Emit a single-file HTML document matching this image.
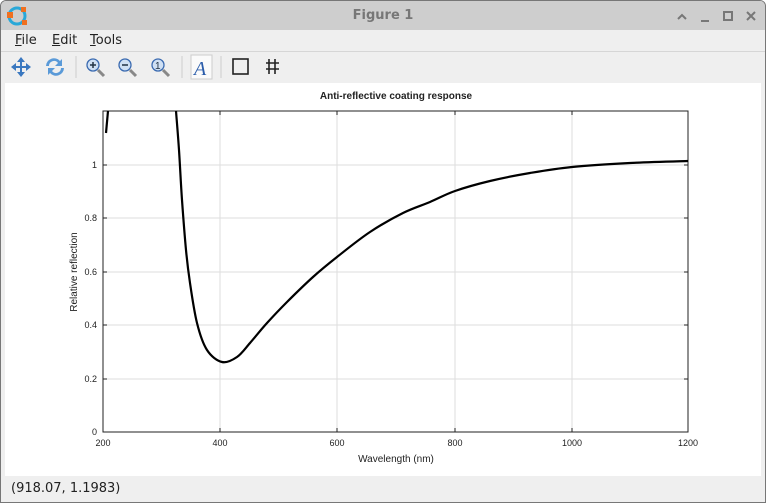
<!DOCTYPE html>
<html><head><style>
body{margin:0;width:766px;height:503px;overflow:hidden;background:#fff;font-family:"Liberation Sans","DejaVu Sans",sans-serif}
.win{position:absolute;left:0;top:0;width:764px;height:501px;border:1px solid #777;border-radius:6px 6px 0 0;background:#efefef;overflow:hidden}
.title{position:absolute;left:0;top:0;width:100%;height:29px;background:#cecece;text-align:center;line-height:30px;font-size:13px;color:#777;font-weight:bold;font-family:"DejaVu Sans",sans-serif}
.menu{position:absolute;top:29px;left:0;width:100%;height:21px;background:#efefef;border-bottom:1px solid #d6d6d6;font-size:13px;font-family:"DejaVu Sans",sans-serif;color:#222}
.menu span{position:absolute;top:3px}
.tb{position:absolute;top:51px;left:0;width:100%;height:30px;background:#efefef}
.plot{position:absolute;top:82px;left:4px;width:756px;height:393px;background:#fff}
.status{position:absolute;top:476px;left:0;width:100%;height:25px;background:#efefef;font-size:13px;font-family:"DejaVu Sans",sans-serif;color:#222}
</style></head><body><div class="win">
<div class="title">Figure 1
<svg style="position:absolute;left:5px;top:4px" width="22" height="22"><circle cx="11" cy="11" r="8" fill="none" stroke="#2aa8d8" stroke-width="3"/><rect x="1" y="7" width="6" height="6" fill="#f07020"/><rect x="15" y="2" width="5" height="5" fill="#f07020"/><rect x="16" y="15" width="5" height="5" fill="#f07020"/></svg>
<svg style="position:absolute;left:672px;top:8px" width="90" height="16" stroke="#777" stroke-width="2" fill="none"><path d="M5 10l4-4 4 4"/><path d="M28 12h8"/><rect x="51" y="3" width="8" height="8"/><path d="M74 3l8 8M82 3l-8 8"/></svg>
</div>
<div class="menu"><span style="left:14px"><u>F</u>ile</span><span style="left:51px"><u>E</u>dit</span><span style="left:89px"><u>T</u>ools</span></div>
<div class="tb"><svg width="300" height="30">
<g fill="#3a78c0"><path d="M20 5l4 5h-3v4h4v-3l5 4-5 4v-3h-4v4h3l-4 5-4-5h3v-4h-4v3l-5-4 5-4v3h4v-4h-3z"/></g>
<g fill="#5a9ad8"><path d="M45 14a8 8 0 0 1 14-5l2-2v7h-7l3-3a5 5 0 0 0-9 3z"/><path d="M63 16a8 8 0 0 1-14 5l-2 2v-7h7l-3 3a5 5 0 0 0 9-3z"/></g>
<line x1="75" y1="4" x2="75" y2="26" stroke="#ccc"/>
<g stroke="#888" stroke-width="3"><path d="M97 18l6 6M129 18l6 6M162 18l6 6"/></g>
<g fill="#cfe0f4" stroke="#3a6ab0" stroke-width="1.3"><circle cx="92" cy="13" r="6"/><circle cx="124" cy="13" r="6"/><circle cx="157" cy="13" r="6"/></g>
<path d="M89 13h6M92 10v6M121 13h6" stroke="#234" stroke-width="1.5"/>
<text x="154" y="17" font-size="10" fill="#234">1</text>
<line x1="181" y1="4" x2="181" y2="26" stroke="#ccc"/>
<rect x="190" y="3" width="21" height="24" fill="#fafafa" stroke="#ccc"/>
<text x="193" y="23" font-size="20" font-style="italic" font-family="Liberation Serif" fill="#2a5caa">A</text>
<line x1="220" y1="4" x2="220" y2="26" stroke="#ccc"/>
<rect x="232" y="7" width="15" height="15" fill="none" stroke="#222" stroke-width="1.6"/>
<path d="M268 7v15M274 7v15M265 11h13M265 17h13" stroke="#222" stroke-width="1.6"/>
</svg></div>
<div class="plot"><svg width="756" height="393" font-family="Liberation Sans,sans-serif" font-size="9">
<g transform="translate(-5,-83)">
<g stroke="#ddd" stroke-width="1"><path d="M220 111v321M337 111v321M455 111v321M572 111v321M103 165h585M103 218h585M103 272h585M103 325h585M103 379h585"/></g>
<rect x="103" y="111" width="585" height="321" fill="none" stroke="#222"/>
<g stroke="#222"><path d="M220 432v-4M337 432v-4M455 432v-4M572 432v-4M220 111v4M337 111v4M455 111v4M572 111v4M103 165h4M103 218h4M103 272h4M103 325h4M103 379h4M688 165h-4M688 218h-4M688 272h-4M688 325h-4M688 379h-4"/></g>
<path d="M106 133L108 111" fill="none" stroke="#000" stroke-width="2.2"/>
<path id="c" fill="none" stroke="#000" stroke-width="2.2" stroke-linejoin="round" d="M176 111L179 150L182 200L186 250L190 283L197 323L207 350L222 362L237 357L250 343L267 323L287 302L313 277L337 257L370 232L403 213L430 202L455 191L490 181L530 173L572 167L630 163L688 161"/>
<g fill="#222" text-anchor="middle"><text x="103" y="446">200</text><text x="220" y="446">400</text><text x="337" y="446">600</text><text x="455" y="446">800</text><text x="572" y="446">1000</text><text x="688" y="446">1200</text>
<text x="396" y="462" font-size="10">Wavelength (nm)</text>
<text x="396" y="99" font-size="10" font-weight="bold">Anti-reflective coating response</text></g>
<g fill="#222" text-anchor="end"><text x="97" y="435">0</text><text x="97" y="382">0.2</text><text x="97" y="328">0.4</text><text x="97" y="275">0.6</text><text x="97" y="221">0.8</text><text x="97" y="168">1</text></g>
<text transform="translate(77,272) rotate(-90)" text-anchor="middle" font-size="10" fill="#222">Relative reflection</text>
</g></svg></div>
<div class="status"><span style="position:absolute;left:10px;top:4px">(918.07, 1.1983)</span></div>
</div>
<script>
var p=[[176,111],[179,150],[182,200],[186,250],[190,283],[197,323],[207,350],[222,362],[237,357],[250,343],[267,323],[287,302],[313,277],[337,257],[370,232],[403,213],[430,202],[455,191],[490,181],[530,173],[572,167],[630,163],[688,161]];
var d="M"+p[0][0]+" "+p[0][1];
for(var i=0;i<p.length-1;i++){var a=p[i-1]||p[i],b=p[i],c=p[i+1],e=p[i+2]||c;
d+="C"+(b[0]+(c[0]-a[0])/6).toFixed(1)+" "+(b[1]+(c[1]-a[1])/6).toFixed(1)+" "+(c[0]-(e[0]-b[0])/6).toFixed(1)+" "+(c[1]-(e[1]-b[1])/6).toFixed(1)+" "+c[0]+" "+c[1];}
document.getElementById("c").setAttribute("d",d);
</script>
</body></html>
